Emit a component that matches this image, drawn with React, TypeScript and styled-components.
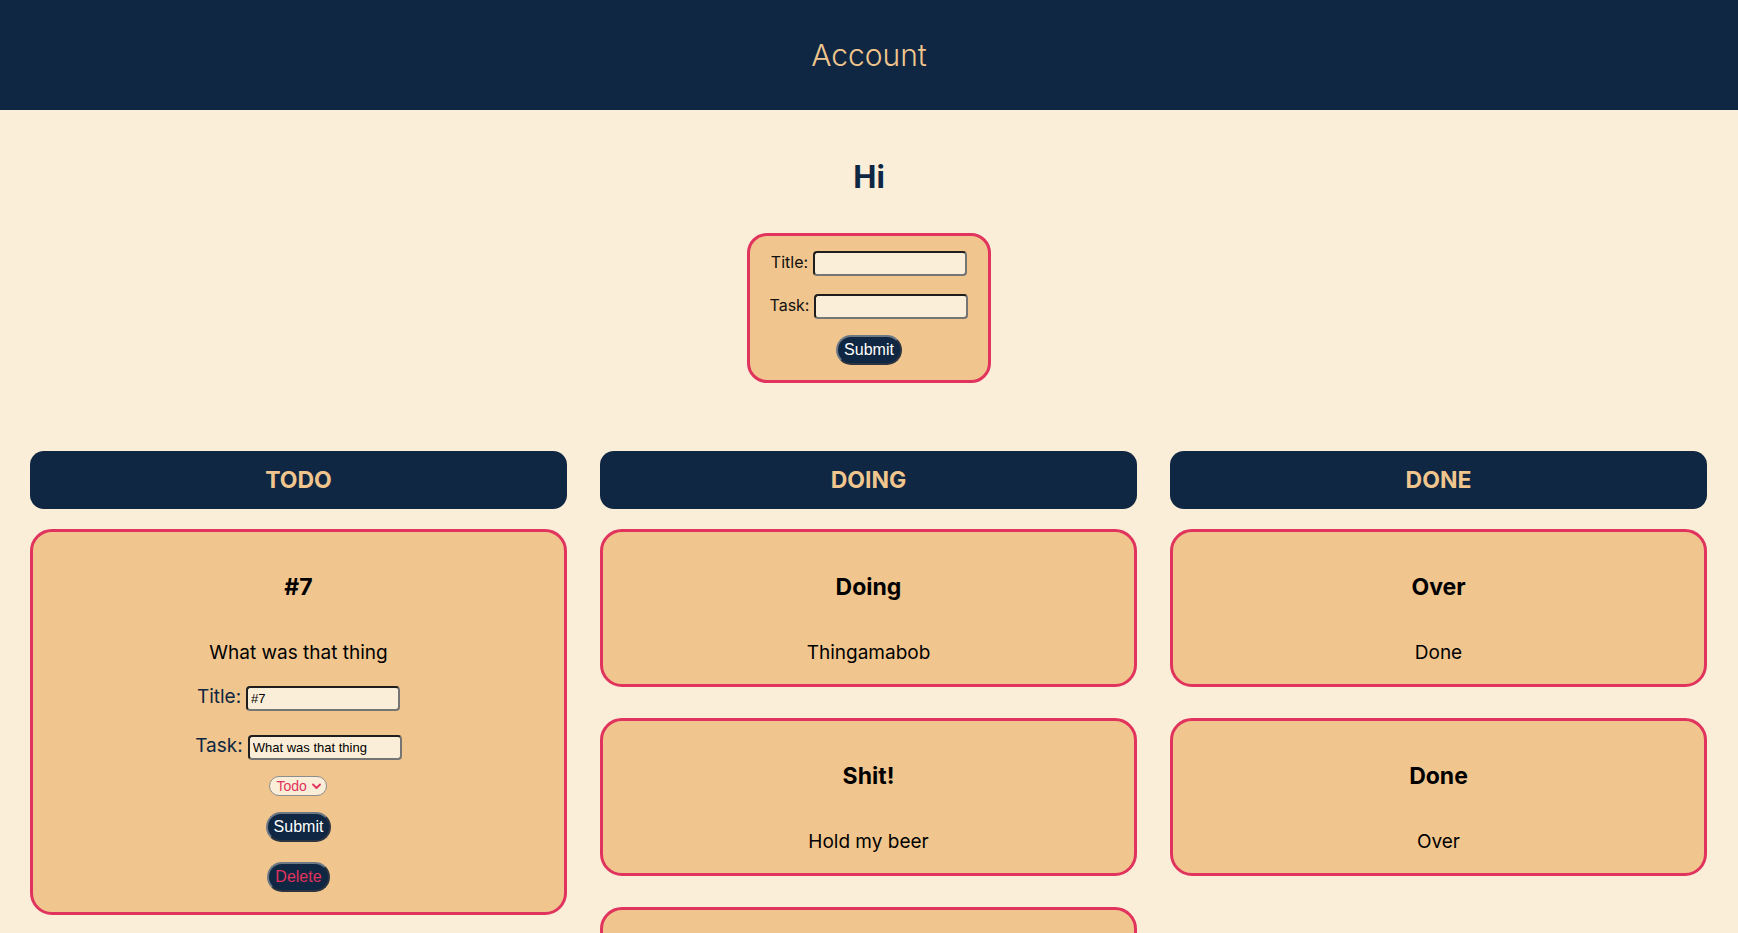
import React from "react";
import styled, { createGlobalStyle } from "styled-components";

const NAVY = "#0f2742";
const SAND = "#f0c68e";
const CREAM = "#faeed8";
const CRIMSON = "#e0335d";

const Global = createGlobalStyle`
  html, body { margin: 0; padding: 0; background: ${CREAM}; }
  body { font-family: Inter, "Noto Sans", sans-serif; }
  * { box-sizing: border-box; }
`;

const TopBar = styled.header`
  height: 110px;
  background: ${NAVY};
  display: flex;
  align-items: center;
  justify-content: center;
`;

const TopTitle = styled.span`
  color: ${SAND};
  font-size: 30px;
  font-weight: 300;
  line-height: 1;
`;

const Greeting = styled.h1`
  margin: 48px 0 0;
  text-align: center;
  font-size: 31px;
  line-height: 38px;
  font-weight: 700;
  color: ${NAVY};
`;

const NewForm = styled.form`
  margin: 37px auto 0;
  width: max-content;
  padding: 15px 20px 15px;
  border: 3px solid ${CRIMSON};
  border-radius: 20px;
  background: ${SAND};
  display: flex;
  flex-direction: column;
  align-items: center;
`;

const Row = styled.div<{ $gap: number }>`
  display: flex;
  align-items: baseline;
  justify-content: center;
  gap: 5px;
  margin-top: ${(p) => p.$gap}px;
`;

const Label = styled.label<{ $card?: boolean }>`
  font-size: ${(p) => (p.$card ? 19 : 16)}px;
  color: ${(p) => (p.$card ? NAVY : "#111")};
`;

const Field = styled.input`
  width: 154px;
  height: 25px;
  padding: 1px 3px;
  border: 2px solid;
  border-color: #1e1e1e #757575 #757575 #1e1e1e;
  border-radius: 4px;
  background: ${CREAM};
  font-family: "Liberation Sans", Arial, sans-serif;
  font-size: 13px;
  color: #000;
`;

const Btn = styled.button<{ $danger?: boolean; $gap: number }>`
  margin-top: ${(p) => p.$gap}px;
  height: 30px;
  padding: 0 6px;
  border: 2px solid;
  border-color: #6d7886 #2b3440 #2b3440 #6d7886;
  border-radius: 15px;
  background: ${NAVY};
  color: ${(p) => (p.$danger ? CRIMSON : "#fff")};
  font-family: "Liberation Sans", Arial, sans-serif;
  font-size: 16px;
  cursor: pointer;
`;

const Board = styled.main`
  margin-top: 68px;
  padding: 0 31px 0 30px;
  display: grid;
  grid-template-columns: repeat(3, 1fr);
  column-gap: 33px;
  align-items: start;
`;

const Column = styled.section`
  display: flex;
  flex-direction: column;
`;

const ColumnHead = styled.h2`
  margin: 0 0 20px;
  height: 58px;
  border-radius: 14px;
  background: ${NAVY};
  color: ${SAND};
  font-size: 23px;
  font-weight: 700;
  display: flex;
  align-items: center;
  justify-content: center;
`;

const Card = styled.article`
  margin-bottom: 31px;
  padding: 41px 20px 20px;
  border: 3px solid ${CRIMSON};
  border-radius: 22px;
  background: ${SAND};
  display: flex;
  flex-direction: column;
  align-items: center;
`;

const CardTitle = styled.h3`
  margin: 0;
  font-size: 23px;
  line-height: 29px;
  font-weight: 700;
  color: #000;
`;

const CardText = styled.p`
  margin: 39px 0 0;
  font-size: 19px;
  line-height: 23px;
  color: #000;
`;

const EditForm = styled.form`
  display: flex;
  flex-direction: column;
  align-items: center;
  margin-top: 21px;
`;

const SelectWrap = styled.span`
  position: relative;
  display: inline-flex;
  margin-top: 16px;
`;

const Select = styled.select`
  appearance: none;
  width: 58px;
  height: 20px;
  padding: 0 0 0 6px;
  border: 1px solid #8d8d8d;
  border-radius: 10px;
  background: ${CREAM};
  color: ${CRIMSON};
  font-family: "Liberation Sans", Arial, sans-serif;
  font-size: 14px;
  line-height: 18px;
`;

const Chevron = styled.svg`
  position: absolute;
  right: 6px;
  top: 7px;
  width: 9px;
  height: 7px;
  pointer-events: none;
`;

type Item = { title: string; task: string };

const columns: { name: string; items: Item[] }[] = [
  { name: "TODO", items: [{ title: "#7", task: "What was that thing" }] },
  {
    name: "DOING",
    items: [
      { title: "Doing", task: "Thingamabob" },
      { title: "Shit!", task: "Hold my beer" },
      { title: "Later", task: "Something else" },
    ],
  },
  {
    name: "DONE",
    items: [
      { title: "Over", task: "Done" },
      { title: "Done", task: "Over" },
    ],
  },
];

function EditableCard({ item }: { item: Item }) {
  return (
    <Card>
      <CardTitle>{item.title}</CardTitle>
      <CardText>{item.task}</CardText>
      <EditForm onSubmit={(e) => e.preventDefault()}>
        <Row $gap={0}>
          <Label $card>Title:</Label>
          <Field defaultValue={item.title} />
        </Row>
        <Row $gap={23}>
          <Label $card>Task:</Label>
          <Field defaultValue={item.task} />
        </Row>
        <SelectWrap>
          <Select defaultValue="todo">
            <option value="todo">Todo</option>
            <option value="doing">Doing</option>
            <option value="done">Done</option>
          </Select>
          <Chevron viewBox="0 0 9 7">
            <path d="M1 1.5 L4.5 5 L8 1.5" fill="none" stroke={CRIMSON} strokeWidth="1.8" strokeLinecap="round" strokeLinejoin="round" />
          </Chevron>
        </SelectWrap>
        <Btn $gap={16} type="submit">Submit</Btn>
        <Btn $gap={20} $danger type="button">Delete</Btn>
      </EditForm>
    </Card>
  );
}

export default function App() {
  return (
    <>
      <Global />
      <TopBar>
        <TopTitle>Account</TopTitle>
      </TopBar>
      <Greeting>Hi</Greeting>
      <NewForm onSubmit={(e) => e.preventDefault()}>
        <Row $gap={0}>
          <Label>Title:</Label>
          <Field />
        </Row>
        <Row $gap={18}>
          <Label>Task:</Label>
          <Field />
        </Row>
        <Btn $gap={16} type="submit">Submit</Btn>
      </NewForm>
      <Board>
        {columns.map((col) => (
          <Column key={col.name}>
            <ColumnHead>{col.name}</ColumnHead>
            {col.items.map((item, i) =>
              col.name === "TODO" ? (
                <EditableCard key={i} item={item} />
              ) : (
                <Card key={i}>
                  <CardTitle>{item.title}</CardTitle>
                  <CardText>{item.task}</CardText>
                </Card>
              )
            )}
          </Column>
        ))}
      </Board>
    </>
  );
}
